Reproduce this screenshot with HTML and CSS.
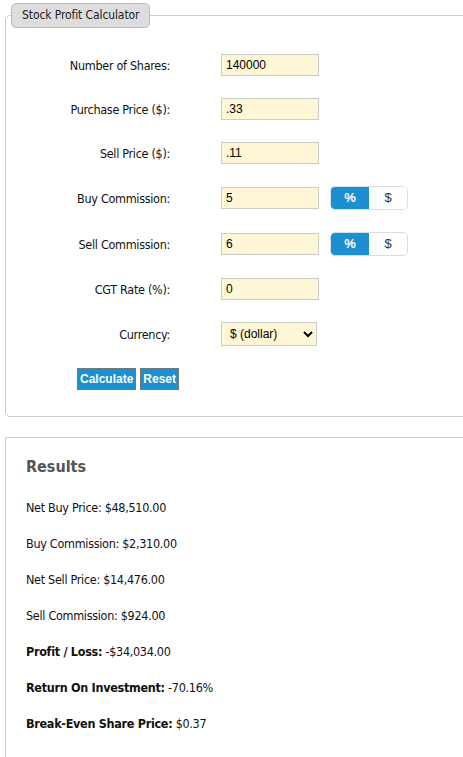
FILE: index.html
```html
<!DOCTYPE html>
<html lang="en">
<head>
    <meta charset="UTF-8">
    <meta name="viewport" content="width=device-width, initial-scale=1.0">
    <title>Stock Profit Calculator</title>
    <link rel="stylesheet" href="styles.css">
</head>
<body>
    <fieldset class="calc">
        <legend>Stock Profit Calculator</legend>

        <div class="rows">
            <label for="shares">Number of Shares:</label>
            <input type="text" id="shares" value="140000">
            <span></span>

            <label for="buy_price">Purchase Price ($):</label>
            <input type="text" id="buy_price" value=".33">
            <span></span>

            <label for="sell_price">Sell Price ($):</label>
            <input type="text" id="sell_price" value=".11">
            <span></span>

            <label for="buy_comm">Buy Commission:</label>
            <input type="text" id="buy_comm" value="5">
            <div class="toggle">
                <span class="on">%</span>
                <span>$</span>
            </div>

            <label for="sell_comm">Sell Commission:</label>
            <input type="text" id="sell_comm" value="6">
            <div class="toggle">
                <span class="on">%</span>
                <span>$</span>
            </div>

            <label for="cgt">CGT Rate (%):</label>
            <input type="text" id="cgt" value="0">
            <span></span>

            <label for="currency">Currency:</label>
            <select id="currency">
                <option>$ (dollar)</option>
                <option>&euro; (euro)</option>
                <option>&pound; (pound)</option>
            </select>
            <span></span>

            <div class="buttons">
                <button type="button">Calculate</button>
                <button type="button">Reset</button>
            </div>
        </div>
    </fieldset>

    <div class="results">
        <h2>Results</h2>
        <p>Net Buy Price: $48,510.00</p>
        <p>Buy Commission: $2,310.00</p>
        <p>Net Sell Price: $14,476.00</p>
        <p>Sell Commission: $924.00</p>
        <p><b>Profit / Loss:</b> -$34,034.00</p>
        <p><b>Return On Investment:</b> -70.16%</p>
        <p><b>Break-Even Share Price:</b> $0.37</p>
    </div>
</body>
</html>
```

FILE: styles.css
```css
body {
    margin: 0;
    padding: 3px 0 0 5px;
    font-family: 'DejaVu Sans Condensed', 'DejaVu Sans', sans-serif;
    font-size: 12.5px;
    letter-spacing: -0.3px;
    color: #111;
    overflow-x: hidden;
}

.calc {
    width: 520px;
    margin: 0;
    padding: 0 0 0 5px;
    border: 1px solid #ccc;
    border-radius: 5px;
}

.calc legend {
    padding: 5px 10px;
    font-size: 12px;
    line-height: 13px;
    letter-spacing: -0.1px;
    color: #222;
    background-color: #ddd;
    border: 1px solid #bbb;
    border-radius: 5px;
}

.rows {
    display: grid;
    grid-template-columns: 199px 98px auto;
    column-gap: 11px;
    row-gap: 22px;
    align-items: center;
    padding: 26px 0 26px 0;
}

.rows label {
    text-align: right;
    padding-right: 40px;
}

.rows input,
.rows select {
    box-sizing: border-box;
    font-family: 'Liberation Sans', Arial, sans-serif;
    font-size: 12px;
    letter-spacing: 0;
    color: #000;
    background-color: #fff6d6;
    border: 1px solid #ccc;
}

.rows input {
    width: 98px;
    height: 22px;
    padding: 0 4px;
}

.rows select {
    width: 96px;
    height: 24px;
    padding: 0 4px;
}

.toggle {
    display: flex;
    width: 78px;
    height: 24px;
    box-sizing: border-box;
    border: 1px solid #ddd;
    border-radius: 5px;
    overflow: hidden;
    font-family: 'Liberation Sans', Arial, sans-serif;
    font-size: 13px;
    letter-spacing: 0;
}

.toggle span {
    width: 38px;
    line-height: 22px;
    text-align: center;
    color: #333;
    background-color: #fff;
}

.toggle span.on {
    font-weight: bold;
    color: #fff;
    background-color: #1b8fd0;
}

.buttons {
    grid-column: 1 / -1;
    display: flex;
    gap: 4px;
    padding-left: 66px;
}

.buttons button {
    height: 22px;
    padding: 0 2px;
    font-family: 'Liberation Sans', Arial, sans-serif;
    font-size: 12px;
    font-weight: bold;
    color: #fff;
    background-color: #1b8fd0;
    border: 1px solid #777;
    border-radius: 0;
}

.results {
    width: 520px;
    margin-top: 20px;
    padding: 18px 0 40px 20px;
    border: 1px solid #ccc;
    border-right: none;
    display: flex;
    flex-direction: column;
    gap: 20px;
}

.results h2 {
    margin: 0 0 2px 0;
    font-size: 16px;
    line-height: 22px;
    letter-spacing: 0;
    color: #555;
}

.results p {
    margin: 0;
    line-height: 16px;
}
```
